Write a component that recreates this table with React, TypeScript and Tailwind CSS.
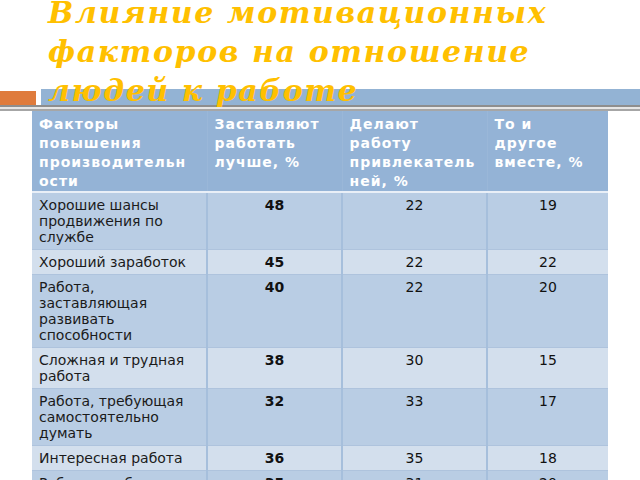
const headers = [
  ["Факторы", "повышения", "производительн", "ости"],
  ["Заставляют", "работать", "лучше, %"],
  ["Делают", "работу", "привлекатель", "ней, %"],
  ["То и", "другое", "вместе, %"],
];

const rows = [
  { f: ["Хорошие шансы", "продвижения по", "службе"], a: "48", b: "22", c: "19" },
  { f: ["Хороший заработок"], a: "45", b: "22", c: "22" },
  { f: ["Работа,", "заставляющая", "развивать", "способности"], a: "40", b: "22", c: "20" },
  { f: ["Сложная и трудная", "работа"], a: "38", b: "30", c: "15" },
  { f: ["Работа, требующая", "самостоятельно", "думать"], a: "32", b: "33", c: "17" },
  { f: ["Интересная работа"], a: "36", b: "35", c: "18" },
  { f: ["Работа, требующая", "ответственности"], a: "35", b: "31", c: "20" },
];

const Lines = ({ lines }: { lines: string[] }) => (
  <>
    {lines.map((l, i) => (
      <div key={i} className="whitespace-nowrap">
        {l}
      </div>
    ))}
  </>
);

export default function App() {
  return (
    <div className="w-[640px] h-[480px] overflow-hidden bg-white">
      {/* title area with decorative bars */}
      <div className="relative h-[111px]">
        <div className="pt-[89px]">
          <div className="flex items-end gap-[5px] h-[16px]">
            <div className="w-[36px] h-[14px] bg-[#df7b3c]" />
            <div className="flex-1 h-[16px] bg-[#93b3d4]" />
          </div>
          <div className="h-[2px] bg-[#8e8e8e]" />
          <div className="h-[2px] bg-[#e6e6e6]" />
          <div className="h-[2px] bg-[#a6a6a6]" />
        </div>
        <h1
          className="absolute left-[48px] top-[-7px] text-[30px] leading-[39px] font-bold italic tracking-[1.6px] text-[#ffc000] whitespace-nowrap"
          style={{ fontFamily: '"DejaVu Serif", serif' }}
        >
          Влияние мотивационных
          <br />
          факторов на отношение
          <br />
          людей к работе
        </h1>
      </div>

      <table
        className="ml-[32px] w-[576px] table-fixed border-collapse"
        style={{ fontFamily: '"DejaVu Sans", sans-serif' }}
      >
        <colgroup>
          <col className="w-[175px]" />
          <col className="w-[135px]" />
          <col className="w-[145px]" />
          <col className="w-[121px]" />
        </colgroup>
        <thead>
          <tr className="bg-[#94b3d6]">
            {headers.map((h, i) => (
              <th
                key={i}
                className="align-top text-left pl-[7px] pt-[4px] pb-0 text-[14px] leading-[19px] font-bold tracking-[1px] text-white border-b-2 border-b-[#e9eff7] border-r border-r-[#9ab7d8] last:border-r-0"
              >
                <Lines lines={h} />
              </th>
            ))}
          </tr>
        </thead>
        <tbody>
          {rows.map((r, i) => (
            <tr key={i} className={i % 2 === 0 ? "bg-[#b9cde4]" : "bg-[#d3dfed]"}>
              <td className="align-top pl-[7px] pt-[4px] pb-[4px] text-[14px] leading-[16px] text-[#1b1b1b] border-b border-b-[#aec3dd] border-r-2 border-r-[#a6bfdc]">
                <Lines lines={r.f} />
              </td>
              <td className="align-top text-center pt-[4px] pb-[4px] text-[14px] leading-[16px] font-bold text-[#111] border-b border-b-[#aec3dd] border-r-2 border-r-[#a6bfdc]">
                {r.a}
              </td>
              <td className="align-top text-center pt-[4px] pb-[4px] text-[14px] leading-[16px] text-[#111] border-b border-b-[#aec3dd] border-r-2 border-r-[#a6bfdc]">
                {r.b}
              </td>
              <td className="align-top text-center pt-[4px] pb-[4px] text-[14px] leading-[16px] text-[#111] border-b border-b-[#aec3dd]">
                {r.c}
              </td>
            </tr>
          ))}
        </tbody>
      </table>
    </div>
  );
}
